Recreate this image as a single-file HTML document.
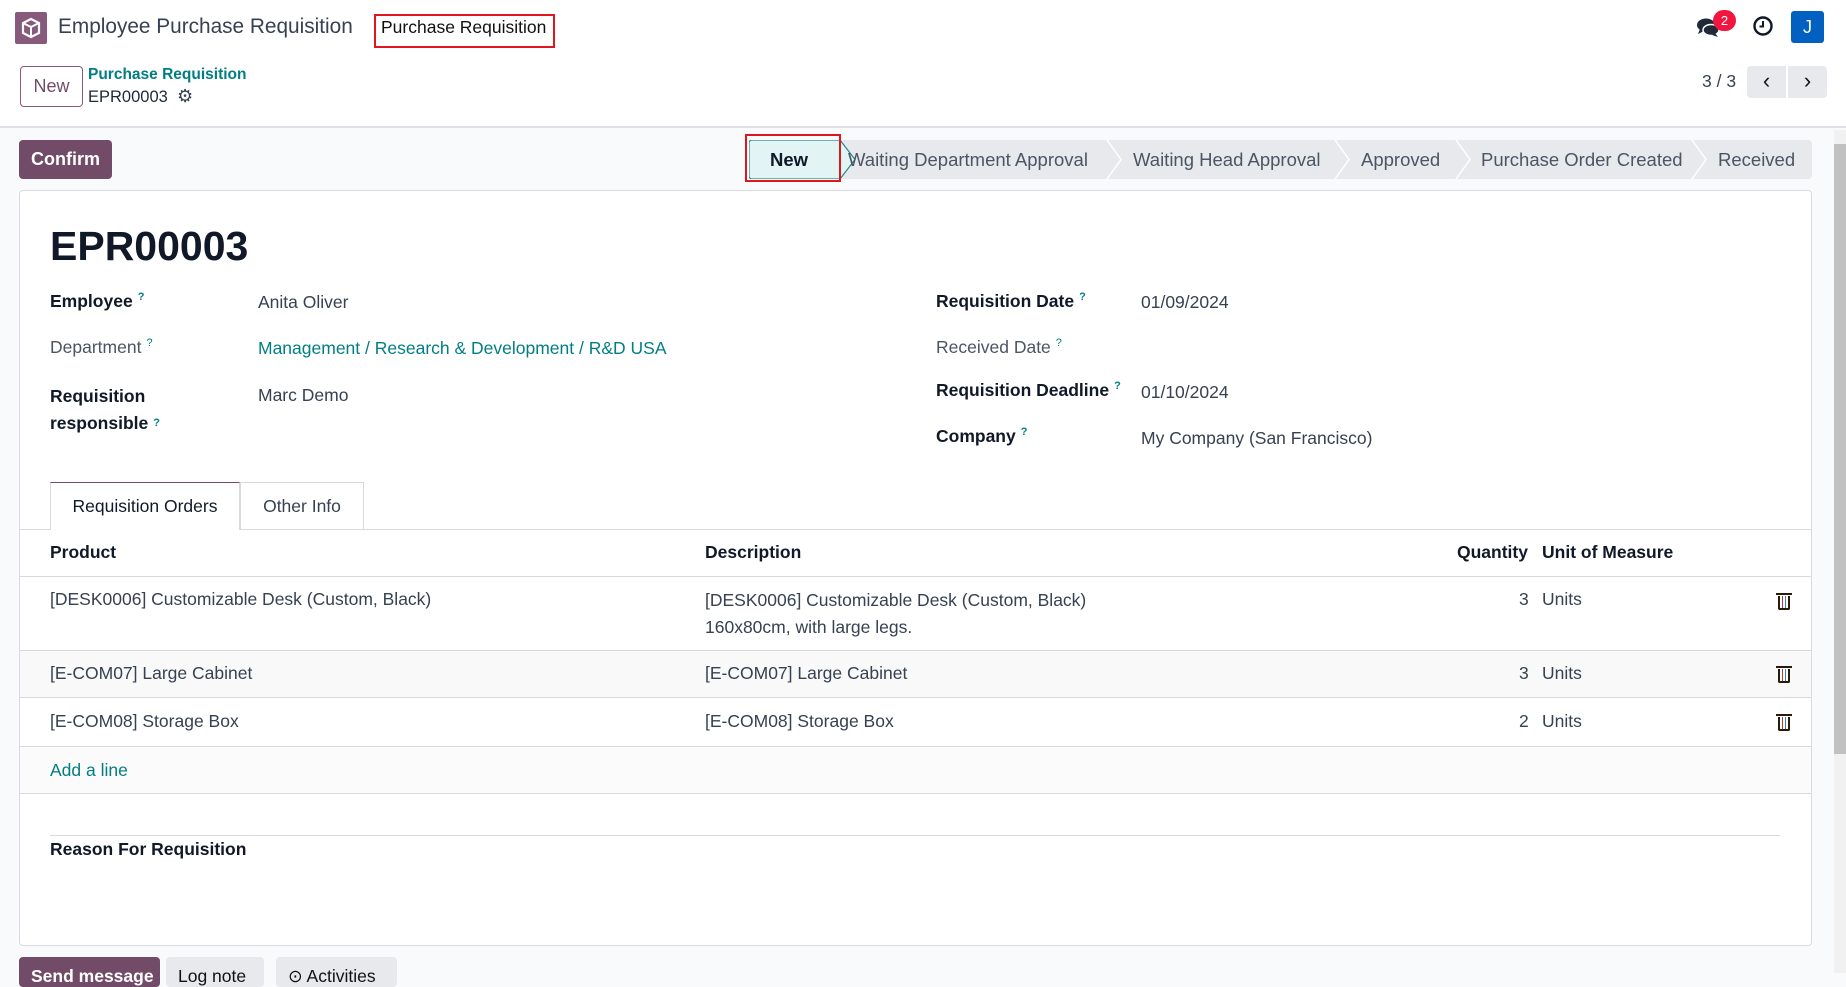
<!DOCTYPE html>
<html><head><meta charset="utf-8"><style>
*{box-sizing:border-box;margin:0;padding:0}
body{width:1846px;height:973px;overflow:hidden;font-family:"Liberation Sans",sans-serif;font-size:17.5px;color:#374151;background:#f9fafb;position:relative}
.a{position:absolute;white-space:nowrap}
.top{position:absolute;left:0;top:0;width:1846px;height:128px;background:#fff;border-bottom:2px solid #dee2e6}
.lbl{font-weight:bold;color:#111827}
.q{color:#017e84;font-size:11px;vertical-align:top;margin-left:5px}
.stat{position:absolute;top:140px;height:39px;line-height:39px;color:#4b5563;font-size:18.5px}
.trash{position:absolute;width:12px;height:14px;border:2px solid #2a1a0a;border-top:none;border-radius:0 0 2px 2px;background:linear-gradient(90deg,#fff 2px,#c0392b 2px,#c0392b 3px,#fff 3px,#fff 5px,#2e86c1 5px,#2e86c1 6px,#fff 6px)}
.trash:before{content:"";position:absolute;left:-4px;top:-3px;width:16px;height:2px;background:#2a1a0a}
</style></head><body>
<div class="top"></div>
<div class="a" style="left:15px;top:12px;width:32px;height:32px;background:#875a7b;border-radius:2px"></div>
<svg class="a" style="left:19px;top:16px" width="24" height="24" viewBox="0 0 24 24"><path d="M12 3l8 4v10l-8 4-8-4V7z" fill="none" stroke="#fff" stroke-width="2.2"/><path d="M4 7l8 4 8-4M12 11v10" fill="none" stroke="#fff" stroke-width="2"/></svg>
<div class="a" style="left:58px;top:15px;font-size:20.8px;color:#374151">Employee Purchase Requisition</div>
<div class="a" style="left:374px;top:14px;width:181px;height:34px;border:2px solid #e0161e"></div>
<div class="a" style="left:381px;top:17px;font-size:17.5px;color:#111">Purchase Requisition</div>
<svg class="a" style="left:1696px;top:16px" width="26" height="24" viewBox="0 0 26 24"><ellipse cx="10" cy="9" rx="9" ry="6.5" fill="#1f2937"/><path d="M4 13l-2 5 6-3z" fill="#1f2937"/><ellipse cx="15" cy="14" rx="8" ry="5.5" fill="#1f2937" stroke="#fff" stroke-width="1.5"/><path d="M19 17l3 4-6-2z" fill="#1f2937"/></svg>
<div class="a" style="left:1713px;top:10px;width:23px;height:21px;border-radius:11px;background:#f0163f;color:#fff;font-size:13px;text-align:center;line-height:21px">2</div>
<svg class="a" style="left:1752px;top:15px" width="22" height="22" viewBox="0 0 22 22"><circle cx="11" cy="11" r="8.5" fill="none" stroke="#111827" stroke-width="2.4"/><path d="M11 6v5.5H7.5" fill="none" stroke="#111827" stroke-width="2"/></svg>
<div class="a" style="left:1791px;top:11px;width:33px;height:32px;border-radius:3px;background:#0160c0;color:#fff;text-align:center;line-height:32px;font-size:18px">J</div>
<div class="a" style="left:20px;top:66px;width:63px;height:41px;border:1px solid #8a5a7d;border-radius:4px;color:#714b67;text-align:center;line-height:39px;font-size:18px">New</div>
<div class="a" style="left:88px;top:66px;color:#017e84;font-weight:bold;font-size:15.5px">Purchase Requisition</div>
<div class="a" style="left:88px;top:88px;color:#1f2937;font-size:16.5px">EPR00003</div>
<div class="a" style="left:177px;top:86px;font-size:18px;color:#374151">⚙</div>
<div class="a" style="left:1702px;top:71px;font-size:17.5px">3 / 3</div>
<div class="a" style="left:1747px;top:66px;width:39px;height:32px;background:#e7e9ed;border-radius:4px 0 0 4px;text-align:center;line-height:30px;font-size:22px;color:#111">‹</div>
<div class="a" style="left:1788px;top:66px;width:39px;height:32px;background:#e7e9ed;border-radius:0 4px 4px 0;text-align:center;line-height:30px;font-size:22px;color:#111">›</div>
<div class="a" style="left:1834px;top:130px;width:12px;height:843px;background:#f1f1f1"></div>
<div class="a" style="left:1834px;top:144px;width:12px;height:610px;background:#c1c1c1"></div>
<div class="a" style="left:19px;top:140px;width:93px;height:39px;background:#714b67;border-radius:4px;color:#fff;font-weight:bold;text-align:center;line-height:39px;font-size:18px">Confirm</div>
<div class="a" style="left:749px;top:140px;width:1063px;height:39px;background:#e7e9ed;border-radius:4px"></div>
<svg class="a" style="left:749px;top:140px" width="1063" height="39"><path d="M0 3a3 3 0 0 1 3-3h88l15 19.5-15 19.5H3a3 3 0 0 1-3-3z" fill="#e2f4f4" stroke="#1f8a8a" stroke-width="1.2"/><g fill="none" stroke="#fff" stroke-width="1.5"><path d="M358 0l14 19.5-14 19.5M586 0l14 19.5-14 19.5M707 0l14 19.5-14 19.5M943 0l14 19.5-14 19.5"/></g></svg>
<div class="a" style="left:745px;top:134px;width:96px;height:48px;border:2px solid #e0161e"></div>
<div class="stat" style="left:770px;color:#111827;font-weight:bold">New</div>
<div class="stat" style="left:848px">Waiting Department Approval</div>
<div class="stat" style="left:1133px">Waiting Head Approval</div>
<div class="stat" style="left:1361px">Approved</div>
<div class="stat" style="left:1481px">Purchase Order Created</div>
<div class="stat" style="left:1718px">Received</div>
<div class="a" style="left:19px;top:190px;width:1793px;height:756px;background:#fff;border:1px solid #d8dadd;border-radius:4px"></div>
<div class="a" style="left:50px;top:223px;font-size:41px;font-weight:bold;color:#111827">EPR00003</div>
<div class="a lbl" style="left:50px;top:291px">Employee<span class="q">?</span></div>
<div class="a" style="left:258px;top:292px">Anita Oliver</div>
<div class="a" style="left:50px;top:337px;color:#4b5563">Department<span class="q">?</span></div>
<div class="a" style="left:258px;top:338px;color:#017e84">Management / Research &amp; Development / R&amp;D USA</div>
<div class="a lbl" style="left:50px;top:383px;line-height:27px">Requisition<br>responsible<span class="q">?</span></div>
<div class="a" style="left:258px;top:385px">Marc Demo</div>
<div class="a lbl" style="left:936px;top:291px">Requisition Date<span class="q">?</span></div>
<div class="a" style="left:1141px;top:292px">01/09/2024</div>
<div class="a" style="left:936px;top:337px;color:#4b5563">Received Date<span class="q">?</span></div>
<div class="a lbl" style="left:936px;top:380px">Requisition Deadline<span class="q">?</span></div>
<div class="a" style="left:1141px;top:382px">01/10/2024</div>
<div class="a lbl" style="left:936px;top:426px">Company<span class="q">?</span></div>
<div class="a" style="left:1141px;top:428px">My Company (San Francisco)</div>
<div class="a" style="left:20px;top:529px;width:1791px;height:1px;background:#d8dadd"></div>
<div class="a" style="left:50px;top:482px;width:190px;height:48px;background:#fff;border:1px solid #d8dadd;border-top:1px solid #714b67;border-bottom:none;text-align:center;line-height:46px;color:#111827">Requisition Orders</div>
<div class="a" style="left:240px;top:482px;width:124px;height:47px;border:1px solid #d8dadd;border-bottom:none;text-align:center;line-height:46px;color:#374151">Other Info</div>
<div class="a lbl" style="left:50px;top:542px">Product</div>
<div class="a lbl" style="left:705px;top:542px">Description</div>
<div class="a lbl" style="left:1457px;top:542px">Quantity</div>
<div class="a lbl" style="left:1542px;top:542px">Unit of Measure</div>
<div class="a" style="left:20px;top:576px;width:1791px;height:1px;background:#d8dadd"></div>
<div class="a" style="left:20px;top:650px;width:1791px;height:48px;background:#f9f9f9;border-top:1px solid #d8dadd;border-bottom:1px solid #d8dadd"></div>
<div class="a" style="left:20px;top:746px;width:1791px;height:48px;background:#fbfbfb;border-top:1px solid #d8dadd;border-bottom:1px solid #d8dadd"></div>
<div class="a" style="left:50px;top:589px">[DESK0006] Customizable Desk (Custom, Black)</div>
<div class="a" style="left:705px;top:587px;line-height:27px">[DESK0006] Customizable Desk (Custom, Black)<br>160x80cm, with large legs.</div>
<div class="a" style="left:1519px;top:589px">3</div><div class="a" style="left:1542px;top:589px">Units</div>
<div class="a" style="left:50px;top:663px">[E-COM07] Large Cabinet</div>
<div class="a" style="left:705px;top:663px">[E-COM07] Large Cabinet</div>
<div class="a" style="left:1519px;top:663px">3</div><div class="a" style="left:1542px;top:663px">Units</div>
<div class="a" style="left:50px;top:711px">[E-COM08] Storage Box</div>
<div class="a" style="left:705px;top:711px">[E-COM08] Storage Box</div>
<div class="a" style="left:1519px;top:711px">2</div><div class="a" style="left:1542px;top:711px">Units</div>
<div class="trash" style="left:1778px;top:596px"></div>
<div class="trash" style="left:1778px;top:669px"></div>
<div class="trash" style="left:1778px;top:717px"></div>
<div class="a" style="left:50px;top:760px;color:#017e84">Add a line</div>
<div class="a" style="left:50px;top:835px;width:1730px;height:1px;background:#d8dadd"></div>
<div class="a lbl" style="left:50px;top:839px">Reason For Requisition</div>
<div class="a" style="left:19px;top:957px;width:141px;height:30px;background:#714b67;border-radius:4px;color:#fff;font-weight:bold;padding:9px 12px">Send message</div>
<div class="a" style="left:166px;top:957px;width:98px;height:30px;background:#e7e9ed;border-radius:4px;color:#111;padding:9px 12px">Log note</div>
<div class="a" style="left:276px;top:957px;width:121px;height:30px;background:#e7e9ed;border-radius:4px;color:#111;padding:9px 12px">⊙ Activities</div>
</body></html>
